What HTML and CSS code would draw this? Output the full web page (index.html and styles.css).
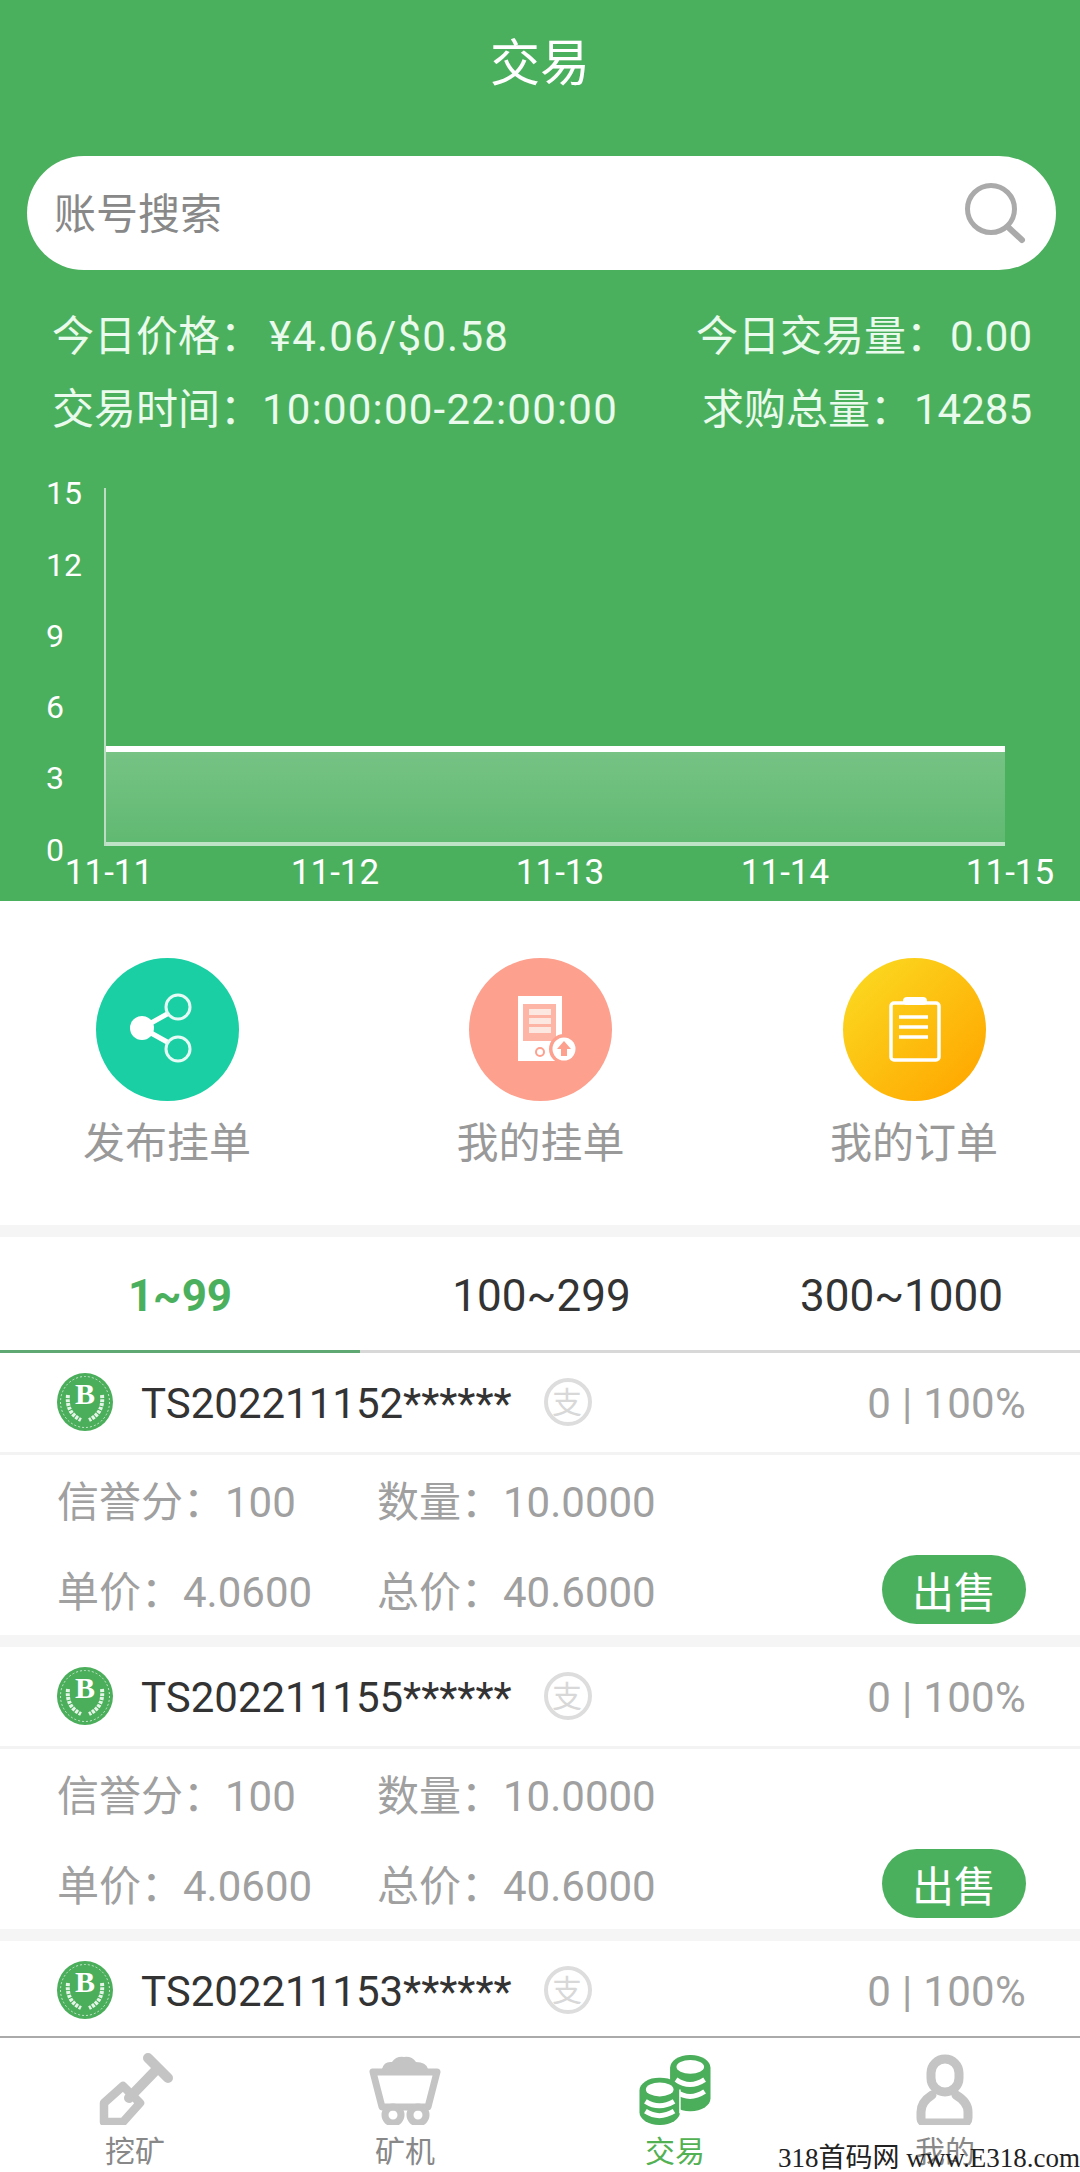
FILE: index.html

```html
<!DOCTYPE html>
<html lang="zh-CN">
<head>
  <meta charset="UTF-8">
  <title>交易</title>
  <link rel="stylesheet" href="styles.css">
</head>
<body>
  <div class="page">
    <div class="content">
      <header class="top">
        <h1 class="title">交易</h1>
        <div class="search">
          <span class="search-text">账号搜索</span>
          <svg class="search-icon" width="62" height="62" viewBox="0 0 62 62">
            <circle cx="27" cy="27" r="23.5" fill="none" stroke="#aaa" stroke-width="5"/>
            <path d="M44 45 L58 58" stroke="#aaa" stroke-width="6" stroke-linecap="round"/>
          </svg>
        </div>
        <div class="stat-row">
          <span>今日价格：<i class="num price">¥4.06/$0.58</i></span>
          <span>今日交易量：<i class="val">0.00</i></span>
        </div>
        <div class="stat-row">
          <span>交易时间：<i class="num">10:00:00-22:00:00</i></span>
          <span>求购总量：<i class="val">14285</i></span>
        </div>
        <svg class="chart" width="1080" height="455" viewBox="0 3 1080 455">
          <defs>
            <linearGradient id="area" x1="0" y1="0" x2="0" y2="1">
              <stop offset="0" stop-color="#fff" stop-opacity="0.24"/>
              <stop offset="1" stop-color="#fff" stop-opacity="0.12"/>
            </linearGradient>
          </defs>
          <rect x="105" y="309" width="900" height="90" fill="url(#area)"/>
          <rect x="105" y="303" width="900" height="6" fill="#fff"/>
          <rect x="105" y="399" width="900" height="4" fill="#bfe3c6"/>
          <rect x="104" y="45" width="2" height="358" fill="#bcdcc3"/>
          <text class="tick" x="46" y="61">15</text>
          <text class="tick" x="46" y="133">12</text>
          <text class="tick" x="46" y="204">9</text>
          <text class="tick" x="46" y="275">6</text>
          <text class="tick" x="46" y="346">3</text>
          <text class="tick" x="46" y="418">0</text>
          <text class="date" x="109" y="441">11-11</text>
          <text class="date" x="335" y="441">11-12</text>
          <text class="date" x="560" y="441">11-13</text>
          <text class="date" x="785" y="441">11-14</text>
          <text class="date" x="1010" y="441">11-15</text>
        </svg>
      </header>

      <section class="actions">
        <div class="action">
          <svg class="action-icon" width="143" height="143" viewBox="0 0 143 143">
            <circle cx="71.5" cy="71.5" r="71.5" fill="#1acfa3"/>
            <path d="M46 70 L73 55 M46 70 L73 85" stroke="#fff" stroke-width="5"/>
            <circle cx="46" cy="70" r="12" fill="#fff"/>
            <circle cx="82" cy="49" r="12" fill="#1acfa3" stroke="#e6fbf5" stroke-width="3"/>
            <circle cx="82" cy="91" r="12" fill="#1acfa3" stroke="#e6fbf5" stroke-width="3"/>
          </svg>
          <span>发布挂单</span>
        </div>
        <div class="action">
          <svg class="action-icon" width="143" height="143" viewBox="0 0 143 143">
            <circle cx="71.5" cy="71.5" r="71.5" fill="#fda08e"/>
            <rect x="49" y="38" width="44" height="65" fill="#fff"/>
            <rect x="54" y="46" width="33" height="37" fill="#fdb5a6"/>
            <rect x="60" y="51" width="22" height="6" fill="#fde7e1"/>
            <rect x="60" y="60" width="22" height="6" fill="#fde7e1"/>
            <rect x="60" y="69" width="22" height="6" fill="#fde7e1"/>
            <circle cx="71" cy="94" r="4" fill="none" stroke="#fda08e" stroke-width="2"/>
            <circle cx="95" cy="91" r="15" fill="#fda08e"/>
            <circle cx="95" cy="91" r="11.5" fill="#fff"/>
            <path d="M95 83 L102 91 H98 V98 H92 V91 H88 Z" fill="#fda08e"/>
          </svg>
          <span>我的挂单</span>
        </div>
        <div class="action">
          <svg class="action-icon" width="143" height="143" viewBox="0 0 143 143">
            <defs>
              <linearGradient id="gold" x1="0" y1="0" x2="1" y2="1">
                <stop offset="0.1" stop-color="#fbd720"/>
                <stop offset="0.9" stop-color="#ffa800"/>
              </linearGradient>
            </defs>
            <circle cx="71.5" cy="71.5" r="71.5" fill="url(#gold)"/>
            <rect x="48" y="45" width="48" height="57" rx="3" fill="none" stroke="#fff" stroke-width="3.5"/>
            <rect x="60" y="39" width="24" height="8" rx="4" fill="#fff"/>
            <path d="M56 59 H85 M56 69 H85 M56 79 H85" stroke="#fff" stroke-width="3.5"/>
          </svg>
          <span>我的订单</span>
        </div>
      </section>

      <nav class="tabs">
        <div class="tab active">1~99</div>
        <div class="tab">100~299</div>
        <div class="tab">300~1000</div>
      </nav>

      <article class="card">
        <div class="card-head">
          <svg class="coin" width="56" height="58" viewBox="0 0 56 58">
            <ellipse cx="28" cy="29" rx="28" ry="29" fill="#4bae5b"/>
            <ellipse cx="28" cy="29" rx="24.5" ry="25.5" fill="none" stroke="#c9e8cf" stroke-width="1" stroke-dasharray="2 2"/>
            <text class="coin-b" x="28" y="31">B</text>
            <path d="M11 22 Q9 40 24 47 M45 22 Q47 40 32 47" fill="none" stroke="#e4f4e7" stroke-width="4" stroke-dasharray="3 1"/>
          </svg>
          <span class="acct">TS202211152******</span>
          <svg class="pay" width="48" height="48" viewBox="0 0 48 48">
            <circle cx="24" cy="24" r="22" fill="none" stroke="#ddd" stroke-width="4"/>
            <text class="pay-t" x="23" y="35">支</text>
          </svg>
          <span class="rate">0 | 100%</span>
        </div>
        <div class="card-body">
          <span>信誉分：<i>100</i></span>
          <span>数量：<i>10.0000</i></span>
          <span></span>
          <span>单价：<i>4.0600</i></span>
          <span>总价：<i>40.6000</i></span>
          <button class="sell">出售</button>
        </div>
      </article>

      <article class="card">
        <div class="card-head">
          <svg class="coin" width="56" height="58" viewBox="0 0 56 58">
            <ellipse cx="28" cy="29" rx="28" ry="29" fill="#4bae5b"/>
            <ellipse cx="28" cy="29" rx="24.5" ry="25.5" fill="none" stroke="#c9e8cf" stroke-width="1" stroke-dasharray="2 2"/>
            <text class="coin-b" x="28" y="31">B</text>
            <path d="M11 22 Q9 40 24 47 M45 22 Q47 40 32 47" fill="none" stroke="#e4f4e7" stroke-width="4" stroke-dasharray="3 1"/>
          </svg>
          <span class="acct">TS202211155******</span>
          <svg class="pay" width="48" height="48" viewBox="0 0 48 48">
            <circle cx="24" cy="24" r="22" fill="none" stroke="#ddd" stroke-width="4"/>
            <text class="pay-t" x="23" y="35">支</text>
          </svg>
          <span class="rate">0 | 100%</span>
        </div>
        <div class="card-body">
          <span>信誉分：<i>100</i></span>
          <span>数量：<i>10.0000</i></span>
          <span></span>
          <span>单价：<i>4.0600</i></span>
          <span>总价：<i>40.6000</i></span>
          <button class="sell">出售</button>
        </div>
      </article>

      <article class="card">
        <div class="card-head">
          <svg class="coin" width="56" height="58" viewBox="0 0 56 58">
            <ellipse cx="28" cy="29" rx="28" ry="29" fill="#4bae5b"/>
            <ellipse cx="28" cy="29" rx="24.5" ry="25.5" fill="none" stroke="#c9e8cf" stroke-width="1" stroke-dasharray="2 2"/>
            <text class="coin-b" x="28" y="31">B</text>
            <path d="M11 22 Q9 40 24 47 M45 22 Q47 40 32 47" fill="none" stroke="#e4f4e7" stroke-width="4" stroke-dasharray="3 1"/>
          </svg>
          <span class="acct">TS202211153******</span>
          <svg class="pay" width="48" height="48" viewBox="0 0 48 48">
            <circle cx="24" cy="24" r="22" fill="none" stroke="#ddd" stroke-width="4"/>
            <text class="pay-t" x="23" y="35">支</text>
          </svg>
          <span class="rate">0 | 100%</span>
        </div>
      </article>
    </div>

    <footer class="nav">
      <div class="nav-item">
        <svg width="90" height="73" viewBox="0 0 90 73">
          <path d="M58 6 L78 26 M68 16 L39 46" fill="none" stroke="#c4c4c4" stroke-width="10" stroke-linecap="round"/>
          <path d="M33 34 L14 51 V70 H33 L50 51 Z" fill="none" stroke="#c4c4c4" stroke-width="8.500" stroke-linejoin="round"/>
        </svg>
        <span>挖矿</span>
      </div>
      <div class="nav-item">
        <svg width="90" height="73" viewBox="0 0 90 73">
          <path d="M22 17 Q24 9 32 10 Q36 4 44 5 Q52 4 56 10 Q66 10 68 17 Z" fill="#c4c4c4"/>
          <path d="M13 20 H77 L68 55 H22 Z" fill="none" stroke="#c4c4c4" stroke-width="7" stroke-linejoin="round"/>
          <circle cx="33" cy="63" r="8" fill="none" stroke="#c4c4c4" stroke-width="7"/>
          <circle cx="58" cy="63" r="8" fill="none" stroke="#c4c4c4" stroke-width="7"/>
        </svg>
        <span>矿机</span>
      </div>
      <div class="nav-item on">
        <svg width="90" height="73" viewBox="0 0 90 74">
          <rect x="40" y="3" width="41" height="57" rx="20" ry="13" fill="#4bae5b"/>
          <ellipse cx="60.500" cy="15" rx="14" ry="7" fill="#fff"/>
          <path d="M46 28 Q60 38 75 28 M46 40 Q60 50 75 40" fill="none" stroke="#fff" stroke-width="5"/>
          <rect x="9" y="26" width="41" height="48" rx="20" ry="13" fill="#4bae5b"/>
          <path d="M50 38 V62" stroke="#fff" stroke-width="1.500"/>
          <ellipse cx="29.500" cy="38" rx="14" ry="7" fill="#fff"/>
          <path d="M15 50 Q29 59 44 50 M15 60 Q29 69 44 60" fill="none" stroke="#fff" stroke-width="5"/>
        </svg>
        <span>交易</span>
      </div>
      <div class="nav-item">
        <svg width="90" height="73" viewBox="0 0 90 73">
          <rect x="31" y="7" width="28" height="33" rx="14" fill="none" stroke="#c4c4c4" stroke-width="9"/>
          <path d="M32 43 Q21 50 21 60 V66 Q21 71 27 71 H63 Q68 71 68 66 V60 Q68 50 56 43" fill="none" stroke="#c4c4c4" stroke-width="9" stroke-linecap="round"/>
        </svg>
        <span>我的</span>
      </div>
      <div class="mark">318首码网 www.E318.com</div>
    </footer>
  </div>
</body>
</html>
```

FILE: styles.css

```css
* {
  box-sizing: border-box;
}
body {
  margin: 0;
  background: #fff;
  font-family: 'Roboto', 'Noto Sans CJK SC', sans-serif;
}
i {
  font-style: normal;
}
.page {
  width: 1080px;
  height: 2172px;
  display: flex;
  flex-direction: column;
  overflow: hidden;
}
.content {
  flex: 1;
  min-height: 0;
  overflow: hidden;
}

/* top green block */
.top {
  height: 901px;
  background: #4bb05e;
  color: #eafaec;
}
.title {
  margin: 0;
  height: 124px;
  padding-top: 2px;
  line-height: 124px;
  text-align: center;
  font-size: 50px;
  font-weight: 400;
  color: #fff;
}
.search {
  display: flex;
  align-items: center;
  justify-content: space-between;
  height: 114px;
  margin: 32px 24px 30px 27px;
  padding: 0 30px 0 27px;
  background: #fff;
  border-radius: 57px;
}
.search-text {
  padding-bottom: 5px;
  font-size: 42px;
  color: #888;
}
.stat-row {
  display: flex;
  justify-content: space-between;
  height: 73px;
  padding: 0 48px 0 52px;
  line-height: 73px;
  font-size: 42px;
}
.num {
  letter-spacing: 1.2px;
}
.price {
  margin-left: 7px;
}
.val {
  margin-left: 2px;
}
.chart {
  display: block;
}
.tick, .date {
  fill: #fff;
  font-family: 'Roboto', sans-serif;
}
.tick {
  font-size: 32px;
}
.date {
  font-size: 35px;
  text-anchor: middle;
}

/* three shortcuts */
.actions {
  display: flex;
  justify-content: space-between;
  height: 324px;
  padding: 57px 82px 0 83px;
}
.action {
  display: flex;
  flex-direction: column;
  align-items: center;
  width: 168px;
  font-size: 42px;
  color: #999;
}
.action span {
  margin-top: 12px;
  line-height: 62px;
}

/* range tabs */
.tabs {
  display: flex;
  height: 128px;
  border-top: 12px solid #f5f5f5;
  border-bottom: 3px solid #d8d8d8;
}
.tab {
  flex: 0 0 360px;
  height: 116px;
  padding-left: 3px;
  line-height: 118px;
  text-align: center;
  font-size: 44px;
  color: #333;
}
.tab.active {
  padding-left: 0;
  font-weight: 700;
  color: #4bb05e;
  border-bottom: 3px solid #5fa873;
}

/* sell cards */
.card {
  height: 294px;
  border-bottom: 12px solid #f5f5f5;
}
.card-head {
  display: flex;
  align-items: center;
  height: 102px;
  padding: 0 54px 3px 57px;
  border-bottom: 3px solid #f3f3f3;
}
.acct {
  margin-left: 28px;
  padding-top: 5px;
  font-size: 42px;
  color: #333;
}
.coin, .pay {
  margin-top: 2px;
}
.pay {
  margin-left: 32px;
}
.pay-t {
  fill: #d8d8d8;
  font-size: 30px;
  text-anchor: middle;
  font-family: 'Noto Sans CJK SC', sans-serif;
}
.coin-b {
  fill: #fff;
  font-size: 30px;
  font-weight: 700;
  text-anchor: middle;
  font-family: 'Liberation Serif', serif;
}
.rate {
  margin-left: auto;
  padding-top: 5px;
  font-size: 42px;
  letter-spacing: 0.3px;
  color: #a0a0a0;
}
.card-body {
  display: grid;
  grid-template-columns: 320px 1fr auto;
  grid-auto-rows: 86px;
  row-gap: 4px;
  align-items: center;
  padding: 0 54px 0 57px;
  font-size: 42px;
  color: #a0a0a0;
}
.sell {
  width: 144px;
  height: 69px;
  margin-top: 2px;
  padding: 0;
  border: none;
  border-radius: 35px;
  background: #4bb05e;
  color: #fff;
  font-family: inherit;
  font-size: 42px;
}

/* bottom bar */
.nav {
  position: relative;
  display: flex;
  height: 136px;
  border-top: 2px solid #aaa;
  background: #fff;
}
.nav-item {
  flex: 1;
  display: flex;
  flex-direction: column;
  align-items: center;
  padding-top: 14px;
  font-size: 30px;
  color: #888;
}
.nav-item svg {
  display: block;
}
.nav-item span {
  margin-top: 12px;
  line-height: 30px;
}
.nav-item.on {
  color: #52b152;
}
.mark {
  position: absolute;
  right: 0;
  bottom: 0;
  font-family: 'Liberation Serif', 'Noto Sans CJK SC', serif;
  font-size: 27px;
  line-height: 27px;
  white-space: nowrap;
  color: #222;
}
```
